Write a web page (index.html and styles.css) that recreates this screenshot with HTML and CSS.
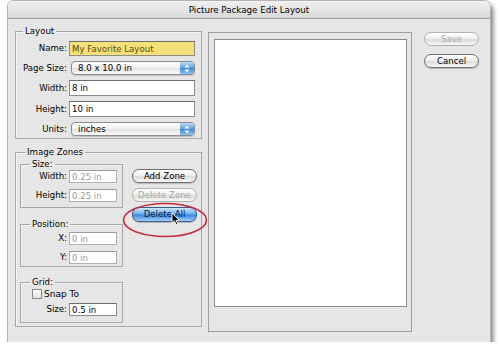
FILE: index.html
```html
<!DOCTYPE html>
<html>
<head>
  <meta charset="UTF-8">
  <title>Picture Package Edit Layout</title>
  <link rel="stylesheet" href="styles.css">
</head>
<body>
  <div class="window">
    <div class="titlebar">Picture Package Edit Layout</div>
    <div class="content">

      <div class="leftcol">
        <fieldset class="group layout">
          <legend>Layout</legend>
          <div class="form">
            <label>Name:</label>
            <input class="field name" value="My Favorite Layout">
            <label>Page Size:</label>
            <div class="select"><span>8.0 x 10.0 in</span><i class="stepper"><svg width="6" height="9" viewBox="0 0 6 9"><path d="M3 0.5 L5.5 3.5 H0.5 Z M3 8.5 L5.5 5.5 H0.5 Z" fill="#fff"/></svg></i></div>
            <label>Width:</label>
            <input class="field" value="8 in">
            <label>Height:</label>
            <input class="field" value="10 in">
            <label>Units:</label>
            <div class="select"><span>inches</span><i class="stepper"><svg width="6" height="9" viewBox="0 0 6 9"><path d="M3 0.5 L5.5 3.5 H0.5 Z M3 8.5 L5.5 5.5 H0.5 Z" fill="#fff"/></svg></i></div>
          </div>
        </fieldset>

        <fieldset class="group zones">
          <legend>Image Zones</legend>
          <div class="zonebody">
            <div class="subs">
              <fieldset class="sub size">
                <legend>Size:</legend>
                <div class="form small">
                  <label>Width:</label>
                  <input class="field" value="0.25 in" disabled>
                  <label>Height:</label>
                  <input class="field" value="0.25 in" disabled>
                </div>
              </fieldset>
              <fieldset class="sub position">
                <legend>Position:</legend>
                <div class="form small">
                  <label>X:</label>
                  <input class="field" value="0 in" disabled>
                  <label>Y:</label>
                  <input class="field" value="0 in" disabled>
                </div>
              </fieldset>
              <fieldset class="sub grid">
                <legend>Grid:</legend>
                <div class="check"><i class="box"></i><span>Snap To</span></div>
                <div class="form small">
                  <label>Size:</label>
                  <input class="field" value="0.5 in">
                </div>
              </fieldset>
            </div>
            <div class="zonebtns">
              <div class="btn">Add Zone</div>
              <div class="btn off">Delete Zone</div>
              <div class="btn blue">Delete All</div>
            </div>
          </div>
        </fieldset>
      </div>

      <div class="preview"><div class="sheet"></div></div>

      <div class="actions">
        <div class="btn off">Save</div>
        <div class="btn">Cancel</div>
      </div>
    </div>

    <svg class="ring" width="86" height="36" viewBox="0 0 86 36"><ellipse cx="43" cy="18" rx="41.5" ry="16.5" fill="none" stroke="#c42a3e" stroke-width="1.6"/></svg>
    <svg class="cursor" width="10" height="14" viewBox="0 0 10 14"><path d="M1 1 V11 L3.4 8.8 L5.2 12.8 L6.8 12.1 L5.1 8.3 H8.3 Z" fill="#000" stroke="#fff" stroke-width="0.9" stroke-linejoin="round"/></svg>
  </div>
</body>
</html>
```

FILE: styles.css
```css
body{margin:0;background:#fff;font-family:"DejaVu Sans",sans-serif;font-size:8.6px;line-height:11px;color:#000;}

/* window */
.window{
  position:relative;margin:1px 0 0 8px;width:482px;height:341px;
  background:repeating-linear-gradient(#e9e9e9 0 1px,#e3e3e3 1px 2px);
  border-radius:5px 5px 0 0;
  box-shadow:0 0 0 1px #b4b4b4,3px 4px 5px rgba(0,0,0,.55);
}
.titlebar{
  height:17px;line-height:18px;text-align:center;font-size:8.7px;
  background:linear-gradient(#f1f1f1,#d8d8d8);
  border-bottom:1px solid #9a9a9a;border-radius:5px 5px 0 0;
}
.content{display:flex;align-items:flex-start;padding:13px 11px 0 7px;}

/* group boxes */
.group,.sub{margin:0;border:1px solid #a6a6a6;box-shadow:inset 1px 1px 0 rgba(255,255,255,.6);}
legend{padding:0 2px;margin-left:5px;line-height:11px;}
.leftcol{width:187px;margin-top:-6px;}
.layout{padding:4px 6px 2px 2px;}
.zones{margin-top:8px;padding:1px 4px 3px 4px;}

.form{display:grid;grid-template-columns:49px 126px;column-gap:2px;row-gap:5px;align-items:center;}
.form label{text-align:right;white-space:nowrap;}
.form.small{grid-template-columns:46px 48px;row-gap:6px;}

/* inputs */
.field{
  box-sizing:border-box;height:16px;width:100%;margin:0;padding:0 2px;
  font:inherit;color:#000;background:#fff;
  border:1px solid #8c8c8c;border-top-color:#6e6e6e;border-radius:0;outline:none;
}
.field.name{background:#f5e07a;color:#5a4c08;height:15px;}
.field:disabled{color:#9a9a9a;border-color:#b0b0b0;border-top-color:#999;background:#fff;}
.small .field{height:13px;}

.select{
  box-sizing:border-box;height:14px;margin-left:2px;display:flex;align-items:center;justify-content:space-between;
  border:1px solid #8a8a8a;border-radius:4px;
  background:linear-gradient(#fff,#f0f0f0 50%,#e2e2e2 50%,#fafafa);
  box-shadow:0 1px 1px rgba(0,0,0,.15);
}
.select span{padding-left:6px;}
.stepper{
  display:flex;align-items:center;justify-content:center;width:14px;height:12px;margin-right:0;
  border-radius:0 3px 3px 0;
  background:linear-gradient(#bcdcf7,#5d9fe0 50%,#3a86d6 50%,#8cc2f2);
}

/* sub groups */
.zonebody{display:flex;gap:9px;}
.subs{width:103px;}
.sub{padding:0 5px 5px 0;}
.sub legend{margin-left:9px;}
.position{margin-top:11px;padding:2px 5px 2px 0;}
.grid{margin-top:10px;padding:0 5px 6px 0;}
.check{display:flex;align-items:center;gap:2px;height:12px;margin:0 0 3px 11px;}
.box{
  box-sizing:border-box;width:10px;height:10px;border:1px solid #8a8a8a;
  background:linear-gradient(#fdfdfd,#e4e4e4);
}
.check span{font-size:9px;}

/* buttons */
.zonebtns{width:65px;margin-top:10px;display:flex;flex-direction:column;gap:5px;}
.btn{
  box-sizing:border-box;height:14px;line-height:12px;text-align:center;
  border:1px solid #6f6f6f;border-radius:7px;
  background:linear-gradient(#ffffff,#f0f0f0 45%,#dcdcdc 55%,#f7f7f7);
  box-shadow:0 1px 1px rgba(0,0,0,.2);
}
.btn.off{color:#a8a8a8;border-color:#b2b2b2;box-shadow:none;}
.btn.blue{
  height:15px;line-height:13px;
  color:#05204a;border-color:#3c5a86;
  background:linear-gradient(#cfe6fb,#6eaeea 45%,#3d88dc 55%,#9fd0fa);
}

/* preview */
.preview{
  width:204px;height:300px;box-sizing:border-box;margin-left:6px;
  padding:6px 4px 24px 5px;border:1px solid #9e9e9e;
}
.sheet{height:100%;background:#fff;border:1px solid #8c8c8c;box-sizing:border-box;}

.actions{width:55px;margin-left:12px;display:flex;flex-direction:column;gap:8px;}
.actions .btn{height:14px;}

/* annotation */
.ring{position:absolute;left:114px;top:201px;}
.cursor{position:absolute;left:163px;top:211px;}
```
